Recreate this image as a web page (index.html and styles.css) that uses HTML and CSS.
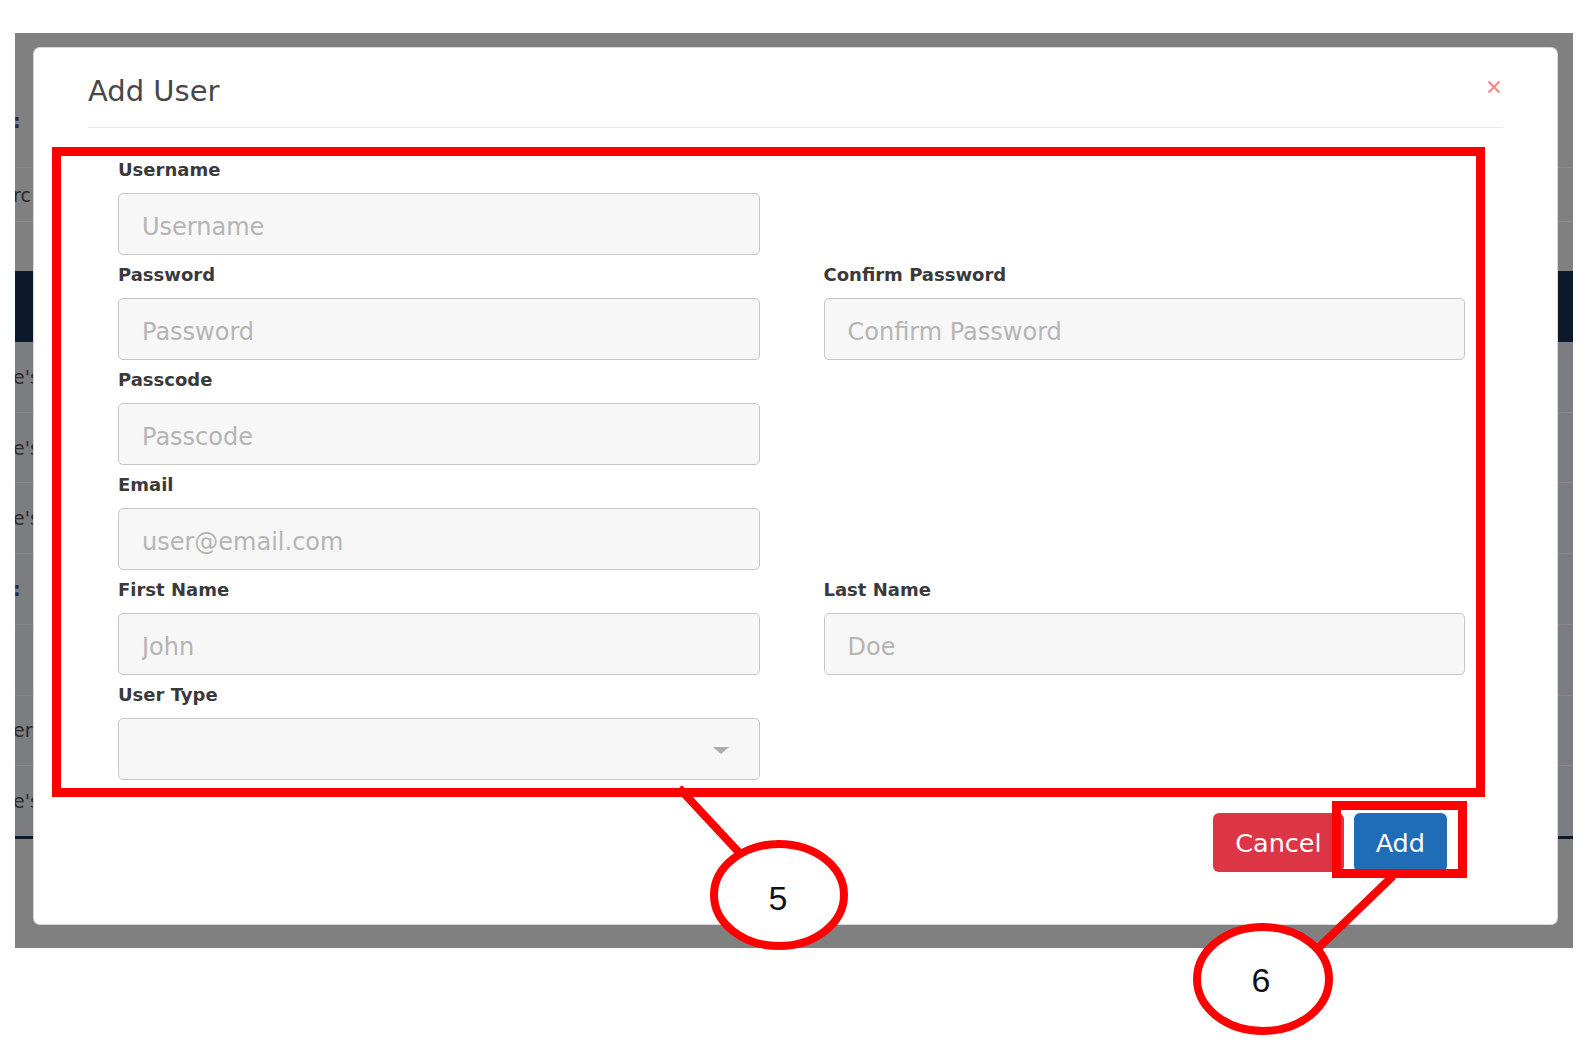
FILE: index.html
```html
<!DOCTYPE html>
<html lang="en">
<head>
    <meta charset="UTF-8">
    <meta name="viewport" content="width=device-width, initial-scale=1.0">
    <title>Add User</title>
    <link rel="stylesheet" href="styles.css">
</head>
<body>
    <div class="screen">
        <!-- page behind the modal, left edge -->
        <div class="side side-left">
            <div class="blk-head"><span class="colon">:</span></div>
            <div class="blk-row"><span>rc</span></div>
            <div class="blk-gap"></div>
            <div class="blk-nav"></div>
            <div class="blk-table">
                <div class="t-row"><span>e's</span></div>
                <div class="t-row"><span>e's</span></div>
                <div class="t-row"><span>e's</span></div>
                <div class="t-row"><span class="colon">:</span></div>
                <div class="t-row"></div>
                <div class="t-row"><span>er</span></div>
                <div class="t-row"><span>e's</span></div>
            </div>
            <div class="blk-line"></div>
            <div class="blk-rest"></div>
        </div>

        <div class="modal-wrap">
            <div class="modal">
                <div class="modal-header">
                    <h4 class="modal-title">Add User</h4>
                    <span class="close">
                        <svg width="14" height="14" viewBox="0 0 14 14"><path d="M1.5 1.5 L12.5 12.5 M12.5 1.5 L1.5 12.5"/></svg>
                    </span>
                </div>

                <form class="modal-body">
                    <div class="form-row">
                        <div class="form-group">
                            <label>Username</label>
                            <input class="form-control" type="text" placeholder="Username">
                        </div>
                    </div>
                    <div class="form-row">
                        <div class="form-group">
                            <label>Password</label>
                            <input class="form-control" type="password" placeholder="Password">
                        </div>
                        <div class="form-group">
                            <label>Confirm Password</label>
                            <input class="form-control" type="password" placeholder="Confirm Password">
                        </div>
                    </div>
                    <div class="form-row">
                        <div class="form-group">
                            <label>Passcode</label>
                            <input class="form-control" type="text" placeholder="Passcode">
                        </div>
                    </div>
                    <div class="form-row">
                        <div class="form-group">
                            <label>Email</label>
                            <input class="form-control" type="email" placeholder="user@email.com">
                        </div>
                    </div>
                    <div class="form-row">
                        <div class="form-group">
                            <label>First Name</label>
                            <input class="form-control" type="text" placeholder="John">
                        </div>
                        <div class="form-group">
                            <label>Last Name</label>
                            <input class="form-control" type="text" placeholder="Doe">
                        </div>
                    </div>
                    <div class="form-row">
                        <div class="form-group">
                            <label>User Type</label>
                            <div class="select-wrap">
                                <select class="form-control">
                                    <option></option>
                                </select>
                            </div>
                        </div>
                    </div>
                </form>

                <div class="modal-footer">
                    <button class="btn btn-cancel">Cancel</button>
                    <button class="btn btn-add">Add</button>
                </div>
            </div>
        </div>

        <!-- page behind the modal, right edge -->
        <div class="side side-right">
            <div class="blk-head"></div>
            <div class="blk-row"></div>
            <div class="blk-gap"></div>
            <div class="blk-nav"></div>
            <div class="blk-table">
                <div class="t-row"></div>
                <div class="t-row"></div>
                <div class="t-row"></div>
                <div class="t-row"></div>
                <div class="t-row"></div>
                <div class="t-row"></div>
                <div class="t-row"></div>
            </div>
            <div class="blk-line"></div>
            <div class="blk-rest"></div>
        </div>
    </div>

    <!-- callouts drawn over the screenshot -->
    <svg class="annotations" width="1584" height="1052" viewBox="0 0 1584 1052">
        <g class="callout">
            <rect x="56.5" y="151.5" width="1424" height="641"/>
            <rect x="1336.5" y="805.5" width="126" height="68"/>
            <line x1="679" y1="788" x2="746" y2="860"/>
            <line x1="1393" y1="876" x2="1310" y2="956"/>
            <ellipse cx="779" cy="895" rx="65" ry="51"/>
            <ellipse cx="1263" cy="979" rx="66" ry="52"/>
        </g>
        <text class="callout-num" x="778" y="910">5</text>
        <text class="callout-num" x="1261" y="992">6</text>
    </svg>
</body>
</html>
```

FILE: styles.css
```css
* {
    margin: 0;
    padding: 0;
    box-sizing: border-box;
}

body {
    position: relative;
    width: 1584px;
    height: 1052px;
    overflow: hidden;
    background: #fff;
    font-family: "DejaVu Sans", Verdana, sans-serif;
}

/* dimmed backdrop */
.screen {
    display: flex;
    width: 1558px;
    height: 915px;
    margin: 33px 0 0 15px;
    background: #808080;
}

.side {
    display: flex;
    flex-direction: column;
    overflow: hidden;
    color: #2b2b2b;
    font-size: 19px;
    white-space: nowrap;
}

.side-left {
    width: 18px;
}

.side-right {
    width: 15px;
}

.blk-head {
    height: 134px;
    padding-top: 76px;
    line-height: 24px;
}

.colon {
    color: #1c2e55;
    font-weight: bold;
}

.blk-row {
    height: 55px;
    display: flex;
    align-items: center;
    border-top: 1px solid #8b8b8b;
    border-bottom: 1px solid #8b8b8b;
}

.blk-gap {
    height: 49px;
}

.blk-nav {
    height: 71px;
    background: #0d1a2d;
}

.blk-table {
    height: 494px;
    display: flex;
    flex-direction: column;
    background: #7b7d80;
}

.t-row {
    flex: 1;
    display: flex;
    align-items: center;
    border-bottom: 1px solid #87888a;
}

.t-row:last-child {
    border-bottom: none;
}

.side-left span {
    margin-left: -2px;
}

.blk-line {
    height: 3px;
    background: #0d1a2d;
}

.blk-rest {
    flex: 1;
}

/* modal */
.modal-wrap {
    flex: 1;
    padding-top: 14px;
}

.modal {
    height: 878px;
    background: #fff;
    border: 1px solid rgba(0, 0, 0, 0.15);
    border-radius: 7px;
    display: flex;
    flex-direction: column;
}

.modal-header {
    margin: 0 54px;
    padding: 25px 0 18px;
    border-bottom: 1px solid #e8e8e8;
    display: flex;
    justify-content: space-between;
    align-items: flex-start;
}

.modal-title {
    font-size: 29px;
    line-height: 36px;
    font-weight: normal;
    color: #474747;
}

.close {
    display: block;
    width: 14px;
    height: 14px;
    margin: 7px 2px 0 0;
}

.close svg {
    display: block;
    fill: none;
    stroke: #f28a8a;
    stroke-width: 2.2;
}

.modal-body {
    padding: 31px 92px 0 84px;
    display: flex;
    flex-direction: column;
    gap: 9px;
}

.form-row {
    display: grid;
    grid-template-columns: 1fr 1fr;
    column-gap: 64px;
}

.form-group label {
    display: block;
    font-size: 18px;
    line-height: 22px;
    font-weight: bold;
    color: #3a3a3a;
    margin-bottom: 12px;
}

.form-control {
    display: block;
    width: 100%;
    height: 62px;
    padding: 6px 23px 0;
    background: #f7f7f7;
    border: 1px solid #c6c6c6;
    border-radius: 5px;
    font-family: "DejaVu Sans", Verdana, sans-serif;
    font-size: 24px;
    color: #555;
    outline: none;
}

.form-control::placeholder {
    color: #b5b5b5;
}

.select-wrap {
    position: relative;
}

select.form-control {
    appearance: none;
    -webkit-appearance: none;
}

.select-wrap::after {
    content: "";
    position: absolute;
    right: 31px;
    top: 29px;
    border-left: 8px solid transparent;
    border-right: 8px solid transparent;
    border-top: 7px solid #acacac;
}

.modal-footer {
    display: flex;
    justify-content: flex-end;
    gap: 10px;
    padding: 33px 110px 0 0;
}

.btn {
    height: 59px;
    padding: 0 22px;
    border: none;
    border-radius: 6px;
    font-family: "DejaVu Sans", Verdana, sans-serif;
    font-size: 25.5px;
    color: #fff;
    cursor: pointer;
}

.btn-cancel {
    background: #dc3545;
}

.btn-add {
    background: #1f6db6;
}

/* callouts */
.annotations {
    position: absolute;
    top: 0;
    left: 0;
    pointer-events: none;
}

.callout rect,
.callout line {
    fill: none;
    stroke: #ff0000;
    stroke-width: 9;
}

.callout line {
    stroke-width: 8;
}

.callout ellipse {
    fill: #fff;
    stroke: #ff0000;
    stroke-width: 8;
}

.callout-num {
    font-family: "Liberation Sans", Arial, sans-serif;
    font-size: 34px;
    fill: #111;
    text-anchor: middle;
}
```
